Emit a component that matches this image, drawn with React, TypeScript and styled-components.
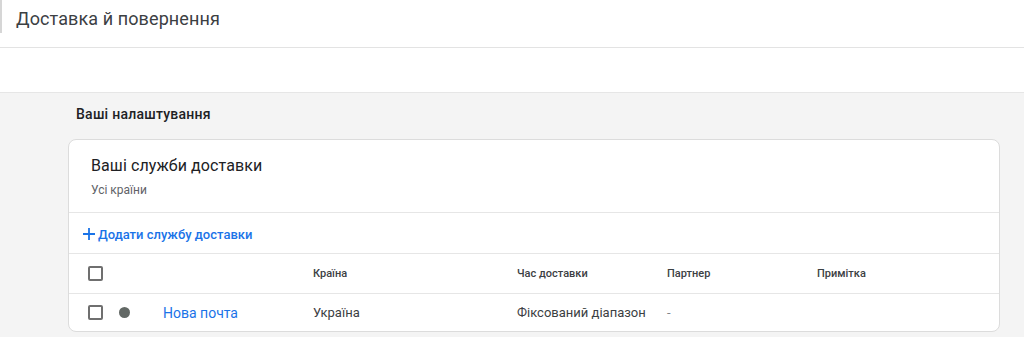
import * as React from "react";
import styled, { createGlobalStyle } from "styled-components";

const FONT = `Roboto, "Noto Sans", Arial, sans-serif`;
const BLUE = "#1a73e8";

const GlobalStyle = createGlobalStyle`
  html, body {
    margin: 0;
    padding: 0;
    background: #ffffff;
    font-family: ${FONT};
    color: #202124;
  }
`;

const Page = styled.div`
  width: 1024px;
  height: 337px;
  overflow: hidden;
  display: flex;
  flex-direction: column;
`;

const TopBar = styled.header`
  height: 48px;
  display: flex;
  align-items: flex-start;
  border-bottom: 1px solid #e3e3e3;
  box-sizing: border-box;
`;

const TitleWrap = styled.div`
  height: 33px;
  border-left: 2px solid #d6d6d6;
  padding-left: 14px;
  display: flex;
  align-items: center;
  padding-top: 3px;
  box-sizing: border-box;
`;

const PageTitle = styled.h1`
  margin: 0;
  font-size: 18px;
  font-weight: 400;
  color: #3c4043;
  letter-spacing: 0.1px;
`;

const SubBar = styled.div`
  height: 45px;
  border-bottom: 1px solid #e6e6e6;
  box-sizing: border-box;
`;

const Content = styled.main`
  flex: 1;
  background: #f4f4f4;
  padding: 0 24px 0 68px;
`;

const SectionLabel = styled.h2`
  margin: 0;
  padding: 13px 0 0 8px;
  height: 46px;
  box-sizing: border-box;
  font-size: 14px;
  font-weight: 500;
  letter-spacing: 0.25px;
  color: #202124;
`;

const Card = styled.section`
  width: 932px;
  background: #ffffff;
  border: 1px solid #dcdcdc;
  border-radius: 8px;
  box-sizing: border-box;
`;

const CardHead = styled.div`
  height: 73px;
  padding: 14px 22px 0;
  box-sizing: border-box;
  border-bottom: 1px solid #e6e6e6;
`;

const CardTitle = styled.div`
  font-size: 16px;
  color: #202124;
  line-height: 24px;
  letter-spacing: 0.1px;
`;

const CardSub = styled.div`
  margin-top: 5px;
  font-size: 12px;
  color: #5f6368;
`;

const AddRow = styled.div`
  height: 41px;
  display: flex;
  align-items: center;
  padding-left: 13px;
  padding-top: 2px;
  border-bottom: 1px solid #e6e6e6;
  box-sizing: border-box;
`;

const AddLink = styled.a`
  display: flex;
  align-items: center;
  gap: 2px;
  color: ${BLUE};
  font-size: 13px;
  font-weight: 500;
  text-decoration: none;
  cursor: pointer;
`;

const Row = styled.div<{ $head?: boolean; $h: number }>`
  display: grid;
  grid-template-columns: 31px 44px 150px 204px 150px 150px 1fr;
  align-items: center;
  height: ${p => p.$h}px;
  padding-left: 19px;
  box-sizing: border-box;
  border-bottom: ${p => (p.$head ? "1px solid #e6e6e6" : "none")};
  font-size: ${p => (p.$head ? "11px" : "13px")};
  font-weight: ${p => (p.$head ? 500 : 400)};
  color: #3c4043;
`;

const Box = styled.span`
  width: 15px;
  height: 15px;
  border: 2px solid #6f6f6f;
  border-radius: 2px;
  box-sizing: border-box;
`;

const Dot = styled.span`
  width: 11px;
  height: 11px;
  border-radius: 50%;
  background: #626865;
`;

const NameLink = styled.a`
  color: ${BLUE};
  text-decoration: none;
  font-size: 14px;
`;

const Cell = styled.span<{ $muted?: boolean }>`
  color: ${p => (p.$muted ? "#80868b" : "inherit")};
`;

const Plus = () => (
  <svg width="14" height="14" viewBox="0 0 14 14">
    <path d="M7 1v12M1 7h12" stroke={BLUE} strokeWidth="1.8" />
  </svg>
);

export default function App() {
  return (
    <Page>
      <GlobalStyle />
      <TopBar>
        <TitleWrap>
          <PageTitle>Доставка й повернення</PageTitle>
        </TitleWrap>
      </TopBar>
      <SubBar />
      <Content>
        <SectionLabel>Ваші налаштування</SectionLabel>
        <Card>
          <CardHead>
            <CardTitle>Ваші служби доставки</CardTitle>
            <CardSub>Усі країни</CardSub>
          </CardHead>
          <AddRow>
            <AddLink>
              <Plus />
              Додати службу доставки
            </AddLink>
          </AddRow>
          <Row $head $h={40}>
            <Box />
            <span />
            <span />
            <Cell>Країна</Cell>
            <Cell>Час доставки</Cell>
            <Cell>Партнер</Cell>
            <Cell>Примітка</Cell>
          </Row>
          <Row $h={37}>
            <Box />
            <Dot />
            <NameLink>Нова почта</NameLink>
            <Cell>Україна</Cell>
            <Cell>Фіксований діапазон</Cell>
            <Cell $muted>-</Cell>
            <Cell />
          </Row>
        </Card>
      </Content>
    </Page>
  );
}
